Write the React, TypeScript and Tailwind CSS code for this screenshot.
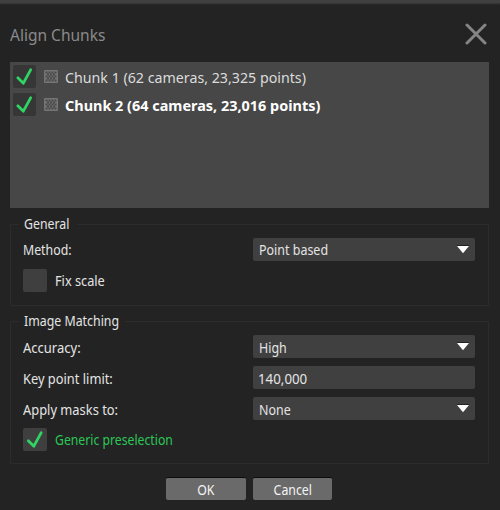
import type { ReactNode } from "react";

function Tick() {
  return (
    <svg viewBox="0 0 24 24" className="block h-full w-full" fill="none" stroke="#2fd463" strokeWidth="2.9" strokeLinecap="round" strokeLinejoin="round">
      <path d="M5 13.4 10.8 19 18.4 5" />
    </svg>
  );
}

function CheckBox({ checked = false, className = "" }: { checked?: boolean; className?: string }) {
  return <span className={`block shrink-0 rounded-[2px] ${className}`}>{checked && <Tick />}</span>;
}

function ChunkIcon() {
  const dots: ReactNode[] = [];
  for (let y = 0; y < 5; y++) {
    for (let x = 0; x < (y % 2 === 0 ? 4 : 3); x++) {
      dots.push(<rect key={`${x}-${y}`} x={1.5 + x * 3 + (y % 2) * 1.5} y={1.5 + y * 2} width="2" height="2" />);
    }
  }
  return (
    <svg viewBox="0 0 14 13" className="ml-2 h-[13px] w-[14px] shrink-0">
      <rect width="14" height="13" rx="1" fill="#757575" />
      <g fill="#4a4a4a">{dots}</g>
    </svg>
  );
}

function ChunkRow({ children, bold = false }: { children: ReactNode; bold?: boolean }) {
  return (
    <div className="flex h-7 items-center">
      <CheckBox checked className="h-[23px] w-[23px] bg-[#363636]" />
      <ChunkIcon />
      <span className={`mt-[2px] ml-[7px] origin-left text-[15px] leading-5 whitespace-nowrap ${bold ? "scale-x-[0.962] font-bold text-white" : "scale-x-[0.948] text-[#dcdcdc]"}`}>
        {children}
      </span>
    </div>
  );
}

type FieldProps = { label: string; value: string; select?: boolean; labelScale: string; valueScale: string };

function Field({ label, value, select = true, labelScale, valueScale }: FieldProps) {
  return (
    <div className="flex h-[31px] items-start">
      <span className={`w-[230px] origin-left text-[14px] whitespace-nowrap text-[#e4e4e4] ${labelScale}`}>{label}</span>
      <div className={`flex h-[23px] w-[222px] items-center justify-between rounded-[2px] bg-[#404040] pr-[6px] ${select ? "pl-[6px]" : "pl-[5px]"}`}>
        <span className={`origin-left text-[14px] leading-5 whitespace-nowrap text-[#e4e4e4] ${valueScale}`}>{value}</span>
        {select && (
          <svg viewBox="0 0 12 9" className="mb-px h-[9px] w-3">
            <path d="M0 1h12L6 8.2z" fill="#fff" />
            <path d="M0 .5h12" stroke="#222" />
          </svg>
        )}
      </div>
    </div>
  );
}

type GroupProps = { title: string; className: string; titleWidth: string; titleScale: string; children: ReactNode };

function Group({ title, className, titleWidth, titleScale, children }: GroupProps) {
  return (
    <section className={`relative ml-[10px] w-[479px] rounded-[1px] border border-[#2c2c2c] pl-3 ${className}`}>
      <h2 className={`absolute -top-[11px] left-[8px] bg-[#232323] px-[5px] text-[14px] leading-5 text-[#e4e4e4] ${titleWidth}`}>
        <span className={`block w-max origin-left whitespace-nowrap ${titleScale}`}>{title}</span>
      </h2>
      {children}
    </section>
  );
}

function DialogButton({ children, className }: { children: ReactNode; className: string }) {
  return (
    <button className={`flex h-[23px] items-center justify-center rounded-[2px] border-t border-[#0b0b0b] bg-[#6a6a6a] text-[14px] leading-5 text-[#f4f4f4] ${className}`}>
      <span className="mt-px scale-x-[0.88]">{children}</span>
    </button>
  );
}

export default function App() {
  return (
    <main className="flex h-[510px] w-[500px] flex-col overflow-hidden bg-[#232323] font-['Noto_Sans',sans-serif]">
      <div className="h-[5px] shrink-0 bg-linear-to-b from-[#404040] from-50% to-[#232323]" />
      <header className="flex h-[57px] shrink-0 items-center justify-between pr-[13px] pl-[10px]">
        <h1 className="mt-[3px] origin-left scale-x-[0.913] text-[17px] leading-6 text-[#8a8a8a]">Align Chunks</h1>
        <svg viewBox="0 0 22 22" className="mt-px h-[22px] w-[22px]" stroke="#858585" strokeWidth="3" strokeLinecap="round">
          <path d="M2 2 20 20M20 2 2 20" />
        </svg>
      </header>
      <div className="ml-[10px] h-[146px] w-[479px] shrink-0 bg-[#474747] pl-[3px]">
        <ChunkRow>Chunk 1 (62 cameras, 23,325 points)</ChunkRow>
        <ChunkRow bold>Chunk 2 (64 cameras, 23,016 points)</ChunkRow>
      </div>
      <Group title="General" titleWidth="w-[58px]" titleScale="scale-x-[0.88]" className="mt-4 h-[82px] shrink-0 pt-[13px]">
        <Field label="Method:" labelScale="scale-x-[0.88] leading-6" value="Point based" valueScale="scale-x-[0.89] mt-px" />
        <div className="flex items-center gap-2">
          <CheckBox className="h-[23px] w-6 bg-[#3f3f3f]" />
          <span className="mt-px origin-left scale-x-[0.91] text-[14px] leading-5 text-[#e4e4e4]">Fix scale</span>
        </div>
      </Group>
      <Group title="Image Matching" titleWidth="w-[106px]" titleScale="scale-x-[0.883]" className="mt-[15px] h-[143px] shrink-0 pt-[13px]">
        <Field label="Accuracy:" labelScale="scale-x-[0.93] leading-[25px]" value="High" valueScale="scale-x-[0.89] mt-[3px]" />
        <Field label="Key point limit:" labelScale="scale-x-[0.918] leading-[25px]" value="140,000" valueScale="scale-x-[0.95] mt-[3px]" select={false} />
        <Field label="Apply masks to:" labelScale="scale-x-[0.92] leading-[25px]" value="None" valueScale="scale-x-[0.89] mt-[3px]" />
        <div className="flex items-center gap-2">
          <CheckBox checked className="h-[23px] w-6 bg-[#3f3f3f]" />
          <span className="origin-left scale-x-[0.873] text-[14px] leading-5 text-[#2bc758]">Generic preselection</span>
        </div>
      </Group>
      <footer className="mt-[13px] ml-[166px] flex gap-[7px]">
        <DialogButton className="w-[80px]">OK</DialogButton>
        <DialogButton className="w-[79px]">Cancel</DialogButton>
      </footer>
    </main>
  );
}
